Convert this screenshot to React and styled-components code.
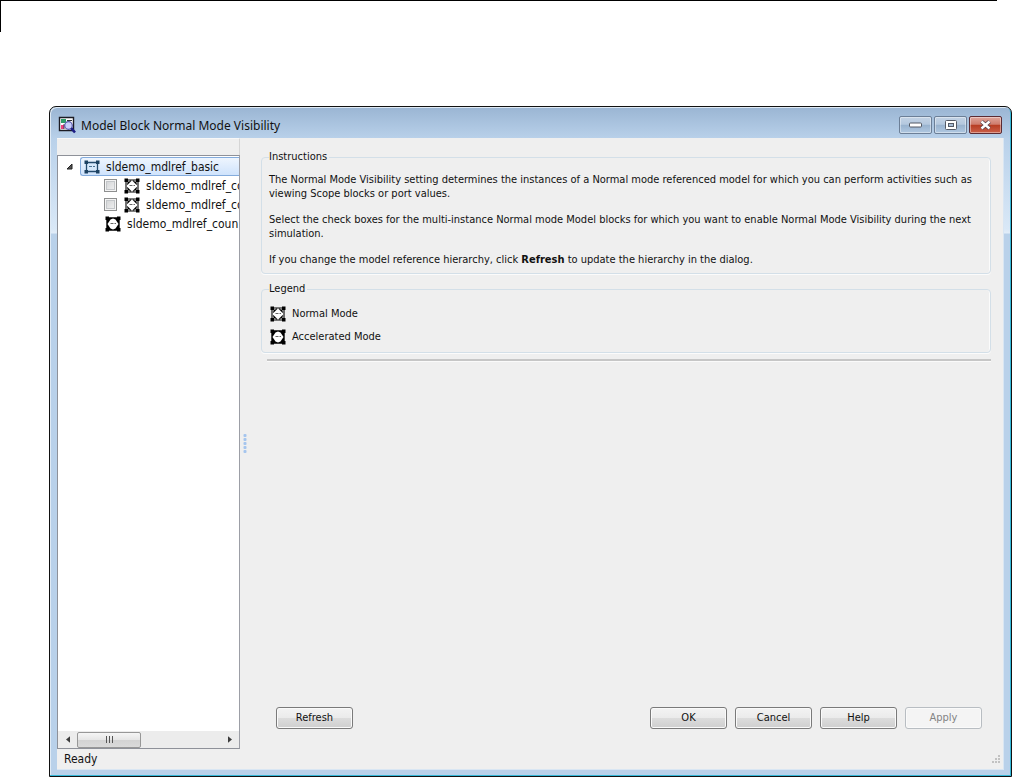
import React, { useState } from 'react';
import styled, { createGlobalStyle } from 'styled-components';

const GlobalStyle = createGlobalStyle`
  * {
    box-sizing: border-box;
  }
  body {
    margin: 0;
    background: #fff;
    color: #111;
    font-family: 'DejaVu Sans Condensed', 'DejaVu Sans', sans-serif;
    font-size: 11px;
    line-height: 14px;
  }
  svg {
    flex: none;
  }
`;

const Page = styled.div`
  display: flex;
  flex-direction: column;
  min-height: 100vh;
`;

// 上の罫線
const PageRule = styled.header`
  height: 32px;
  margin: 0 15px 74px 0;
  border-top: 1px solid #000;
  border-left: 1px solid #000;
`;

const Window = styled.main`
  flex: 1;
  display: flex;
  flex-direction: column;
  margin-left: 49px;
  padding: 0 7px 6px;
  border: 1px solid #111;
  border-radius: 7px 7px 0 0;
  background:
    linear-gradient(#9ab5d3, #b9d1ea 32px, #d9e8f7 122px, #e2edf9 126px, #b9d1ea 127px);
  box-shadow: inset -1px -1px 0 #35b8d8, inset 1px 1px 0 #dfeaf5;
`;

const TitleBar = styled.div`
  display: flex;
  align-items: center;
  height: 31px;
  padding: 5px 2px 0 1px;
`;

const Title = styled.h1`
  flex: 1;
  margin: 0 0 0 5px;
  font: 12px/17px 'Noto Sans', sans-serif;
`;

const Controls = styled.div`
  display: flex;
  gap: 2px;
`;

const ControlButton = styled.button`
  display: flex;
  align-items: center;
  justify-content: center;
  width: 33px;
  height: 18px;
  padding: 0;
  border: 1px solid ${(p) => (p.$close ? '#5b2b33' : '#6c7f97')};
  border-radius: 2px;
  background: ${(p) =>
    p.$close
      ? 'linear-gradient(#dfa59b, #cf7b6c 46%, #b73c22 50%, #cb604a)'
      : 'linear-gradient(#c3d3e5, #b4c8de 46%, #98b2ce 50%, #b0c8e1)'};
  box-shadow: inset 0 0 0 1px rgba(255, 255, 255, 0.4);
`;

const Client = styled.div`
  flex: 1;
  display: flex;
  flex-direction: column;
  border-right: 1px solid #d9e6f3;
  border-bottom: 1px solid #d9e6f3;
  background: #efefef;
`;

const Panels = styled.div`
  flex: 1;
  display: flex;
`;

const Sidebar = styled.aside`
  display: flex;
  flex-direction: column;
  flex: none;
  width: 183px;
`;

const TreeHeader = styled.div`
  height: 17px;
  border-right: 1px solid #d5d5d5;
  border-top: 1px solid #f8f8f8;
`;

const TreeBox = styled.div`
  flex: 1;
  display: flex;
  flex-direction: column;
  border: 1px solid #8e9199;
  border-right-color: #9c9ea6;
  background: #fff;
`;

const Tree = styled.ul`
  flex: 1;
  margin: 0;
  padding: 1px 0 0;
  list-style: none;
  overflow: hidden;
`;

const TreeRow = styled.li`
  display: flex;
  align-items: center;
  height: 19px;
  padding-left: ${(p) => p.$indent}px;
  font-size: 12px;
  white-space: nowrap;
`;

const Expander = styled.button`
  display: flex;
  width: 14px;
  padding: 0;
  border: 0;
  background: none;
`;

const Selected = styled.span`
  flex: 1;
  display: flex;
  align-items: center;
  height: 19px;
  padding-left: 3px;
  border: 1px solid #84acdd;
  border-right: 0;
  border-radius: 3px 0 0 3px;
  background: linear-gradient(#eef5fe, #cfe3fc);
`;

const CheckLabel = styled.label`
  display: flex;
  align-items: center;
`;

const Check = styled.input`
  appearance: none;
  width: 13px;
  height: 13px;
  margin: 0 7px 0 0;
  border: 1px solid #8e8f8f;
  background: linear-gradient(135deg, #cfd1d3, #f4f4f4);
  box-shadow: inset 0 0 0 1px #f4f4f4, inset 0 0 0 2px #c4c7ca;
  &:checked {
    background: #4b6a9b;
  }
`;

const Name = styled.span`
  margin-left: 6px;
`;

const ScrollBar = styled.div`
  display: flex;
  align-items: center;
  height: 17px;
  background: #ececec;
`;

const ArrowButton = styled.button`
  display: flex;
  justify-content: center;
  width: 19px;
  padding: 0;
  border: 0;
  background: none;
`;

const ScrollTrack = styled.div`
  flex: 1;
  display: flex;
`;

const Thumb = styled.div`
  display: flex;
  align-items: center;
  justify-content: center;
  width: 64px;
  height: 16px;
  border: 1px solid #979797;
  border-radius: 2px;
  background: linear-gradient(#f5f5f5, #e6e6e6 48%, #d3d3d3 52%, #dadada);
`;

const Splitter = styled.div`
  flex: none;
  display: flex;
  align-items: center;
  justify-content: center;
  width: 9px;
`;

const Content = styled.section`
  flex: 1;
  display: flex;
  flex-direction: column;
  min-width: 0;
  padding: 12px 12px 20px;
`;

const Group = styled.fieldset`
  min-width: 0;
  margin: 0 0 8px;
  padding: ${(p) => p.$pad};
  border: 1px solid #d3dfe8;
  border-radius: 4px;
  box-shadow: inset -1px 0 0 #fbfbfb, 0 1px 0 #fbfbfb;
`;

const GroupTitle = styled.legend`
  padding: 0 2px 0 0;
`;

const Text = styled.p`
  margin: 0 0 12px;
  &:last-child {
    margin: 0;
  }
`;

const LegendRow = styled.div`
  display: flex;
  align-items: center;
  height: 23px;
  padding-left: 1px;
`;

const Divider = styled.hr`
  width: calc(100% - 6px);
  height: 3px;
  margin: -2px 0 0 6px;
  border: 0;
  border-top: 2px solid #c6c6c6;
  border-bottom: 1px solid #fafafa;
`;

const ButtonRow = styled.div`
  display: flex;
  gap: 8px;
  margin-top: auto;
  padding: 0 9px 0 15px;
`;

const Button = styled.button`
  width: 77px;
  height: 22px;
  margin-right: ${(p) => (p.$first ? 'auto' : '0')};
  padding: 0;
  border: 1px solid #7a7a7a;
  border-radius: 3px;
  background: linear-gradient(#f3f3f3, #ebebeb 48%, #dcdcdc 52%, #cfcfcf);
  box-shadow: inset 0 0 0 1px #fafafa;
  color: #111;
  font: inherit;
  &:disabled {
    border-color: #b8bdc2;
    background: #f4f4f4;
    color: #838383;
  }
`;

const StatusBar = styled.footer`
  display: flex;
  align-items: center;
  justify-content: space-between;
  height: 20px;
  padding: 0 2px 0 7px;
`;

const StatusText = styled.span`
  font-size: 12px;
`;

const AppIcon = () => (
  <svg width="18" height="18" viewBox="0 0 18 18" aria-hidden="true">
    <path d="M1.5 1.5h14v13h-14z" fill="#fff" stroke="#1c1c24" strokeWidth="1.4" />
    <path d="M3 3h5v4H3z" fill="#2f9d68" />
    <path d="M9 4.5h5M8 6.500h2" stroke="#333" />
    <path d="M3 9h3v4H3z" fill="#ec3f7e" />
    <path d="M6 8v5" stroke="#444" />
    <circle cx="10.500" cy="9.500" r="3.800" fill="#c9cffa" stroke="#5656a8" strokeWidth="1.200" />
    <path d="M13.200 12.200l3.800 4.300" stroke="#1d1d85" strokeWidth="2.600" />
  </svg>
);

const ModelIcon = () => (
  <svg width="16" height="14" viewBox="0 0 16 14" aria-hidden="true">
    <path d="M2.5 2.500h11v9h-11z" fill="#d7e9fc" stroke="#234a6c" strokeWidth="1.300" />
    <path d="M0.500 0.500h3.500v3.500h-3.500zM12 0.500h3.500v3.500H12zM0.500 10h3.500v3.500h-3.500zM12 10h3.500v3.500H12z" fill="#1d4262" />
    <path d="M5 6.500h3M9 6.500h2" stroke="#4c7293" />
  </svg>
);

const BlockIcon = ({ solid }) => (
  <svg width="16" height="16" viewBox="0 0 16 16" aria-hidden="true">
    <path d="M2 2h12v12H2z" fill={solid ? '#000' : '#fff'} stroke="#000" strokeWidth={solid ? 1.4 : 1.1} />
    {!solid && <path d="M3 6.500l4-4M9 2.500l4 4M3 9.500l4 4M13 9.500l-4 4" stroke="#222" strokeWidth="1.100" />}
    {!solid && <path d="M3 3l2 2M13 3l-2 2M3 13l2-2M13 13l-2-2" stroke="#000" strokeWidth="1.300" />}
    {solid && <path d="M5.500 3.500L8 2.500l2.500 1L13.500 8l-3 4.500-2.500 1-2.500-1L2.500 8z" fill="#fff" />}
    <path d="M0.500 0.500h3.500v3.500h-3.500zM12 0.500h3.500v3.500H12zM0.500 12h3.500v3.500h-3.500zM12 12h3.500v3.500H12z" fill="#000" />
    <path d="M5.500 7.500h3M9.500 7.500h1.500" stroke="#666" />
  </svg>
);

const Arrow = ({ d }) => (
  <svg width="4" height="7" viewBox="0 0 5 8" aria-hidden="true">
    <path d={d} fill="#3c3c3c" />
  </svg>
);

const CheckRow = ({ name }) => {
  const [checked, setChecked] = useState(false);
  return (
    <TreeRow $indent={46}>
      <CheckLabel>
        <Check type="checkbox" checked={checked} onChange={() => setChecked(!checked)} />
        <BlockIcon />
        <Name>{name}</Name>
      </CheckLabel>
    </TreeRow>
  );
};

const App = () => (
  <Page>
    <GlobalStyle />
    <PageRule />
    <Window>
      <TitleBar>
        <AppIcon />
        <Title>Model Block Normal Mode Visibility</Title>
        <Controls>
          <ControlButton aria-label="Minimize">
            <svg width="13" height="6" viewBox="0 0 13 6">
              <rect x="0.500" y="1" width="12" height="4" rx="1" fill="#fff" stroke="#555b66" />
            </svg>
          </ControlButton>
          <ControlButton aria-label="Maximize">
            <svg width="12" height="10" viewBox="0 0 12 10">
              <rect x="0.500" y="0.500" width="11" height="9" rx="1" fill="#fff" stroke="#555b66" />
              <rect x="3.500" y="3.500" width="5" height="3" fill="#a9bfd8" stroke="#555b66" />
            </svg>
          </ControlButton>
          <ControlButton $close aria-label="Close">
            <svg width="13" height="10" viewBox="0 0 13 10">
              <path d="M2.500 1.500l8 7M10.500 1.500l-8 7" stroke="#53404a" strokeWidth="4" />
              <path d="M2.500 1.500l8 7M10.500 1.500l-8 7" stroke="#fff" strokeWidth="2.400" />
            </svg>
          </ControlButton>
        </Controls>
      </TitleBar>
      <Client>
        <Panels>
          <Sidebar>
            <TreeHeader />
            <TreeBox>
              <Tree>
                <TreeRow $indent={8}>
                  <Expander aria-label="Collapse">
                    <svg width="7" height="7" viewBox="0 0 7 7">
                      <path d="M6 1v5H1z" fill="#555" stroke="#222" />
                    </svg>
                  </Expander>
                  <Selected>
                    <ModelIcon />
                    <Name>sldemo_mdlref_basic</Name>
                  </Selected>
                </TreeRow>
                <CheckRow name="sldemo_mdlref_co" />
                <CheckRow name="sldemo_mdlref_co" />
                <TreeRow $indent={47}>
                  <BlockIcon solid />
                  <Name>sldemo_mdlref_coun</Name>
                </TreeRow>
              </Tree>
              <ScrollBar>
                <ArrowButton aria-label="Scroll left">
                  <Arrow d="M5 0v8L0 4z" />
                </ArrowButton>
                <ScrollTrack>
                  <Thumb>
                    <svg width="9" height="7" viewBox="0 0 9 7">
                      <path d="M1.500 0v7M4.500 0v7M7.500 0v7" stroke="#555" />
                    </svg>
                  </Thumb>
                </ScrollTrack>
                <ArrowButton aria-label="Scroll right">
                  <Arrow d="M0 0v8l5-4z" />
                </ArrowButton>
              </ScrollBar>
            </TreeBox>
          </Sidebar>
          <Splitter>
            <svg width="4" height="22" viewBox="0 0 4 22">
              {[0, 4, 8, 12, 16].map((y) => (
                <rect key={y} x="0.500" y={y + 1} width="3" height="3" rx="1" fill="#a5c5ee" />
              ))}
            </svg>
          </Splitter>
          <Content>
            <Group $pad="9px 7px 6px">
              <GroupTitle>Instructions</GroupTitle>
              <Text>
                The Normal Mode Visibility setting determines the instances of a Normal mode referenced model for which
                you can perform activities such as viewing Scope blocks or port values.
              </Text>
              <Text>
                Select the check boxes for the multi-instance Normal mode Model blocks for which you want to enable
                Normal Mode Visibility during the next simulation.
              </Text>
              <Text>
                If you change the model reference hierarchy, click <b>Refresh</b> to update the hierarchy in the dialog.
              </Text>
            </Group>
            <Group $pad="6px 7px 4px">
              <GroupTitle>Legend</GroupTitle>
              <LegendRow>
                <BlockIcon />
                <Name>Normal Mode</Name>
              </LegendRow>
              <LegendRow>
                <BlockIcon solid />
                <Name>Accelerated Mode</Name>
              </LegendRow>
            </Group>
            <Divider />
            <ButtonRow>
              <Button $first>Refresh</Button>
              <Button>OK</Button>
              <Button>Cancel</Button>
              <Button>Help</Button>
              <Button disabled>Apply</Button>
            </ButtonRow>
          </Content>
        </Panels>
        <StatusBar>
          <StatusText>Ready</StatusText>
          <svg width="10" height="10" viewBox="0 0 10 10">
            <path d="M7 1h2v2H7zM7 4h2v2H7zM4 4h2v2H4zM7 7h2v2H7zM4 7h2v2H4zM1 7h2v2H1z" fill="#c2c2c2" />
          </svg>
        </StatusBar>
      </Client>
    </Window>
  </Page>
);

export default App;
